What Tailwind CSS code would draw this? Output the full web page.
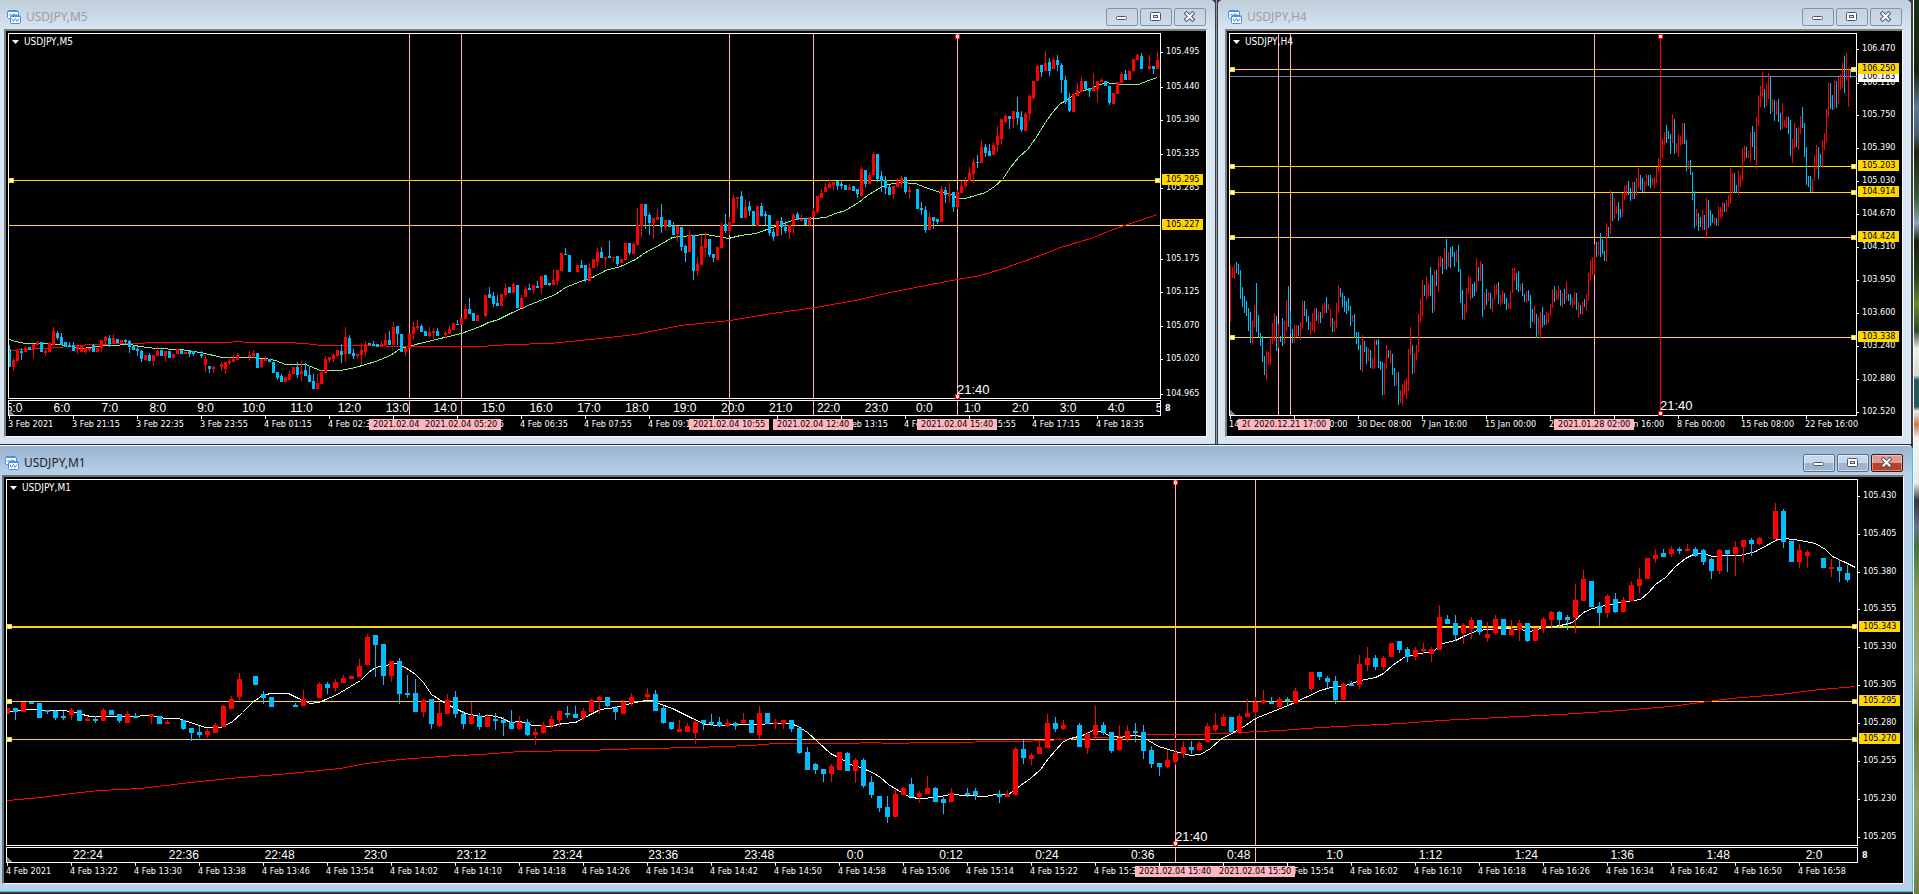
<!DOCTYPE html>
<html lang="en">
<head>
<meta charset="utf-8">
<title>USDJPY charts</title>
<script src="https://cdn.jsdelivr.net/npm/@tailwindcss/browser@4"></script>
</head>
<body class="flex h-screen min-h-[600px] overflow-hidden bg-[#3c3f44] font-['Noto_Sans','Open_Sans',sans-serif]">

<!-- icons shared by the three windows -->
<svg class="hidden" aria-hidden="true">
  <symbol id="chart-icon" viewBox="0 0 14 14">
    <path d="M1.500 .5h9l1 1v7h-10l-1-1v-6z" fill="#fff" stroke="#4a8fe0"/>
    <path d="M1 1.500h10" stroke="#4a8fe0" stroke-width="1"/>
    <path d="M2 5.500l1.500-1.500l1.500 2l1.500-2.500l1.500 1.500h2" fill="none" stroke="#4a8fe0"/>
    <rect x="3.500" y="5.500" width="10" height="8" rx="1" fill="#fff" stroke="#4a8fe0"/>
    <path d="M4 6.500h9" stroke="#4a8fe0"/>
    <path d="M5 8.500l1.500 3l2-3l1.500 3l2-3" fill="none" stroke="#4a8fe0"/>
  </symbol>
  <symbol id="min-icon" viewBox="0 0 32 18"><rect x="10.500" y="8.500" width="10" height="3" rx="1" fill="#fff" stroke="#50566a"/></symbol>
  <symbol id="max-icon" viewBox="0 0 32 18"><rect x="10.500" y="4.500" width="10" height="8" rx="1" fill="#fff" stroke="#50566a"/><rect x="13.500" y="7.500" width="4" height="2" fill="#dfe8f2" stroke="#50566a"/></symbol>
  <symbol id="close-icon" viewBox="0 0 32 18"><path d="M12.500 5.500l6 6M18.500 5.500l-6 6" stroke="#50566a" stroke-width="4" stroke-linecap="square"/><path d="M12.500 5.500l6 6M18.500 5.500l-6 6" stroke="#fff" stroke-width="2" stroke-linecap="square"/></symbol>
</svg>

<main class="grid min-w-0 flex-1 grid-rows-[444fr_450fr]">
  <div class="grid min-h-0 grid-cols-[1215fr_3px_693fr] pr-[2px]">
    <!-- M5 -->
    <section class="flex min-h-0 min-w-0 flex-col rounded-tr-[5px] bg-[#d7e4f2] pr-[8px] pb-[7px] pl-[4px]">
      <header class="-mr-[8px] -ml-[4px] flex h-[29px] shrink-0 items-start gap-[5px] rounded-tr-[5px] bg-linear-to-b from-[#bfcddb] to-[#d7e4f2] pt-[8px] pr-[9px] pl-[7px]">
        <svg class="mt-[2px] size-[14px]"><use href="#chart-icon"/></svg>
        <h2 class="flex-1 text-[12px] leading-[18px] text-[#9b9da0]">USDJPY,M5</h2>
        <div class="flex gap-[2px]">
          <button aria-label="Minimize" class="h-[18px] w-[32px] rounded-[2px] border border-[#8492ad] bg-linear-to-b from-[#c3d1e0] to-[#cddbea]"><svg class="-m-px h-[18px] w-[32px]"><use href="#min-icon"/></svg></button>
          <button aria-label="Maximize" class="h-[18px] w-[32px] rounded-[2px] border border-[#8492ad] bg-linear-to-b from-[#c3d1e0] to-[#cddbea]"><svg class="-m-px h-[18px] w-[32px]"><use href="#max-icon"/></svg></button>
          <button aria-label="Close" class="h-[18px] w-[32px] rounded-[2px] border border-[#8492ad] bg-linear-to-b from-[#c3d1e0] to-[#cddbea]"><svg class="-m-px h-[18px] w-[32px]"><use href="#close-icon"/></svg></button>
        </div>
      </header>
      <div id="m5" class="flex min-h-0 flex-1 border-t-2 border-r border-b border-l-2 border-t-[#808080] border-r-white border-b-white border-l-[#808080] bg-black pt-[2px] pl-[2px]"></div>
    </section>
    <div class="border-x border-[#3b3b40] bg-[#8f979f]"></div>
    <!-- H4 -->
    <section class="flex min-h-0 min-w-0 flex-col rounded-t-[5px] bg-[#d7e4f2] pr-[8px] pb-[7px] pl-[7px]">
      <header class="-mr-[8px] -ml-[7px] flex h-[29px] shrink-0 items-start gap-[5px] rounded-t-[5px] bg-linear-to-b from-[#bfcddb] to-[#d7e4f2] pt-[8px] pr-[9px] pl-[10px]">
        <svg class="mt-[2px] size-[14px]"><use href="#chart-icon"/></svg>
        <h2 class="flex-1 text-[12px] leading-[18px] text-[#9b9da0]">USDJPY,H4</h2>
        <div class="flex gap-[2px]">
          <button aria-label="Minimize" class="h-[18px] w-[32px] rounded-[2px] border border-[#8492ad] bg-linear-to-b from-[#c3d1e0] to-[#cddbea]"><svg class="-m-px h-[18px] w-[32px]"><use href="#min-icon"/></svg></button>
          <button aria-label="Maximize" class="h-[18px] w-[32px] rounded-[2px] border border-[#8492ad] bg-linear-to-b from-[#c3d1e0] to-[#cddbea]"><svg class="-m-px h-[18px] w-[32px]"><use href="#max-icon"/></svg></button>
          <button aria-label="Close" class="h-[18px] w-[32px] rounded-[2px] border border-[#8492ad] bg-linear-to-b from-[#c3d1e0] to-[#cddbea]"><svg class="-m-px h-[18px] w-[32px]"><use href="#close-icon"/></svg></button>
        </div>
      </header>
      <div id="h4" class="flex min-h-0 flex-1 border-t-2 border-r border-b border-l-2 border-t-[#808080] border-r-white border-b-white border-l-[#808080] bg-black pt-[2px] pl-[2px]"></div>
    </section>
  </div>
  <!-- M1, the active window -->
  <section class="flex min-h-0 flex-col border-t border-b border-[#2b2b30] pb-px">
    <div class="flex min-h-0 flex-1 flex-col rounded-tr-[5px] border-t border-r border-b border-t-white border-r-[#35c9e8] border-b-[#35c9e8] bg-[#b9d1ea] pr-[8px] pb-[7px] pl-[2px]">
      <header class="-mr-[8px] -ml-[2px] flex h-[29px] shrink-0 items-start gap-[5px] rounded-tr-[5px] bg-linear-to-b from-[#99b4d1] to-[#b9d1ea] pt-[8px] pr-[9px] pl-[5px]">
        <svg class="mt-[2px] size-[14px]"><use href="#chart-icon"/></svg>
        <h2 class="flex-1 text-[12px] leading-[18px] text-[#1e2329]">USDJPY,M1</h2>
        <div class="flex gap-[2px]">
          <button aria-label="Minimize" class="h-[18px] w-[32px] rounded-[2px] border border-[#5b6b85] bg-linear-to-b from-[#c5d8ec] from-50% to-[#9bb5d2] to-50% shadow-[inset_0_0_0_1px_rgba(255,255,255,0.5)]"><svg class="-m-px h-[18px] w-[32px]"><use href="#min-icon"/></svg></button>
          <button aria-label="Maximize" class="h-[18px] w-[32px] rounded-[2px] border border-[#5b6b85] bg-linear-to-b from-[#c5d8ec] from-50% to-[#9bb5d2] to-50% shadow-[inset_0_0_0_1px_rgba(255,255,255,0.5)]"><svg class="-m-px h-[18px] w-[32px]"><use href="#max-icon"/></svg></button>
          <button aria-label="Close" class="h-[18px] w-[32px] rounded-[2px] border border-[#43141c] bg-linear-to-b from-[#e09a8e] from-50% to-[#bd4026] to-50% shadow-[inset_0_0_0_1px_rgba(255,255,255,0.4)]"><svg class="-m-px h-[18px] w-[32px]"><use href="#close-icon"/></svg></button>
        </div>
      </header>
      <div id="m1" class="flex min-h-0 flex-1 border-t-2 border-r border-b border-l-2 border-t-[#707070] border-r-white border-b-white border-l-[#707070] bg-black pt-[2px] pl-[2px]"></div>
    </div>
  </section>
</main>
<!-- desktop wallpaper showing at the edge -->
<aside class="w-[6px] shrink-0 border-l border-white bg-[linear-gradient(to_bottom,#16301a_0%,#1c2c14_4%,#16240f_8%,#5f7a90_12%,#4a6070_15%,#1c2410_17%,#3d5a35_22%,#8fa5b8_25%,#14200c_27%,#2c441c_31%,#6a8a2a_34%,#2f4a22_37%,#f0f0f0_39%,#d8d8d0_42%,#265a58_42.500%,#265a58_45.500%,#eeeeee_46%,#c87848_47.500%,#f2f2ee_49%,#eceae6_54%,#3a3438_56%,#6c7288_59%,#48723c_61%,#8a9a50_66%,#a3a77a_75%,#6f7f3a_82%,#9aa066_90%,#75803f_100%)]"></aside>

<script>
// Candle tokens: R (rise) or B (fall), then high, body top, body bottom, low. "-" is an empty slot.
const m5Candles = `B345,349,367,367 R358,360,367,371 R350,351,361,361 B348,351,353,360 R346,348,352,352 B347,347,350,350 R344,344,350,358 R341,342,345,345 B342,342,352,352 R348,351,353,356
R342,343,352,352 R327,331,345,345 B331,333,338,340 B333,337,345,345 B342,342,347,347 B342,345,347,347 B342,345,351,351 R346,346,350,354 R346,346,352,352 R348,348,352,354
R348,348,350,352 B344,345,352,352 R348,348,352,352 R340,340,348,352 R336,337,341,345 B335,338,344,347 R334,338,343,343 B339,339,343,343 R340,340,344,344 B339,340,342,345
B340,341,347,353 B346,346,350,350 B346,349,351,356 B350,351,359,362 R355,355,360,360 B353,355,361,361 R355,355,361,366 R346,351,356,356 B350,350,356,356 R351,351,356,362
B351,351,358,358 R354,354,358,358 R349,349,354,354 B350,350,354,354 R352,352,354,354 B351,351,354,357 B351,351,354,356 - B351,354,356,358 R355,359,365,372
B366,366,369,373 R366,367,369,373 - R362,364,367,371 R362,362,369,374 R357,361,363,365 R355,359,362,362 R353,355,360,360 - -
R351,355,357,361 R350,353,356,358 B353,353,368,368 R359,359,367,368 R356,359,361,361 B359,359,362,362 B362,362,373,373 B372,372,378,380 B374,376,382,382 R377,377,382,382
R371,374,380,380 R367,367,374,374 B362,367,375,378 R361,371,374,381 B363,370,376,376 B366,375,382,382 B374,381,389,389 R374,383,389,389 R370,372,384,384 R356,359,373,373
R357,357,360,362 R354,355,359,362 R350,350,356,357 B344,351,355,363 R327,337,354,362 B335,338,354,354 B349,353,356,359 R354,354,356,359 R343,350,355,365 R341,344,352,356
B343,343,345,345 B341,344,346,346 B344,344,347,347 R341,344,347,347 R333,340,345,345 B331,340,345,345 R322,327,345,345 B326,326,334,345 B334,334,352,352 R348,348,352,356
R333,333,349,349 R322,327,334,340 R320,326,328,330 B324,326,332,332 B331,331,336,336 R327,332,336,338 R328,331,333,339 B328,331,336,336 - R331,333,335,338
R326,329,334,334 R323,323,330,330 B320,324,325,325 R318,318,325,325 R304,309,319,319 B298,309,314,314 B313,313,321,321 R315,315,321,321 - R295,295,316,317
B287,294,298,298 B292,296,304,307 B295,303,306,306 R294,294,306,306 R283,288,295,297 B287,287,293,293 R282,284,293,293 B285,285,308,308 R295,298,308,308 R286,289,297,297
B284,288,290,290 R285,285,290,293 B281,286,288,288 R276,276,288,294 B275,275,285,285 B283,283,285,286 R270,280,285,285 R270,270,281,285 R253,253,271,271 B248,254,255,255
B255,255,272,272 - R265,265,272,272 B260,265,268,268 B265,265,280,282 R263,268,281,281 R259,259,268,268 R248,252,262,267 B247,252,258,258 R257,257,259,268
B241,256,258,258 R257,257,258,262 B256,256,264,266 R259,259,263,263 R243,243,260,260 B243,243,253,255 R242,244,254,254 R208,225,245,245 R204,204,226,237 B204,204,216,229
B213,215,223,235 R218,218,223,239 R209,217,220,220 B204,217,227,233 R220,220,227,230 B220,220,227,227 B222,226,235,235 R226,226,234,242 B227,227,247,251 B245,246,253,262
R230,235,252,252 B235,235,271,280 R258,264,271,276 R235,246,265,265 R232,239,248,257 B239,239,255,257 B254,254,258,262 R247,247,260,260 R222,225,248,248 B214,224,231,233
R217,222,231,235 R195,198,223,223 R197,197,199,209 B191,196,218,218 R199,207,218,218 B201,206,211,216 B211,211,225,225 R206,206,226,226 B203,206,216,217 B211,214,216,225
B215,215,233,236 B229,232,237,241 R221,221,236,236 B217,221,227,235 B221,227,231,233 R225,225,232,239 R213,215,225,234 B212,214,220,220 R214,219,221,221 B218,218,225,225
R217,217,225,227 R208,211,217,217 R196,196,212,214 R189,193,198,198 R183,187,192,192 R179,184,188,188 R182,182,185,190 B181,181,186,190 B180,184,186,189 B185,185,190,190
R184,187,190,190 B186,186,191,191 B189,189,194,198 R167,169,196,196 B170,170,184,187 R172,175,184,184 R152,154,175,177 B154,154,179,182 B171,176,181,192 B176,180,188,194
B185,187,195,195 R186,186,194,199 R178,182,187,187 R176,178,183,188 B177,177,192,194 R186,190,192,199 - B189,189,209,209 B202,208,210,215 B206,210,230,233
R212,217,230,230 B217,217,221,229 B219,219,222,224 R186,189,222,222 B187,190,195,203 R183,193,196,203 B192,192,207,212 R190,192,207,209 R181,186,193,193 R177,181,186,188
R167,173,181,181 R158,162,174,183 B155,162,163,168 R140,147,163,163 B144,147,153,157 B144,151,156,156 R142,145,155,155 R126,136,145,152 R119,119,139,145 R114,116,122,123
B116,116,119,129 R111,111,119,128 B97,112,118,125 B111,117,130,132 R112,114,131,131 R94,96,114,121 R81,81,98,100 R65,66,81,81 B65,65,72,77 R51,63,71,71
B58,62,71,76 R57,60,69,69 B55,60,65,71 B63,65,80,93 B76,80,102,104 B93,99,111,112 R94,94,112,112 R83,90,96,96 R77,81,92,92 B81,81,89,90
B88,88,91,97 R73,87,91,91 R81,81,89,102 R78,80,82,82 B81,81,86,86 B86,86,103,105 R93,93,104,104 R82,82,94,94 R72,74,83,83 B70,74,80,80
R71,71,80,80 R59,59,71,72 R54,55,60,60 B53,56,69,69 - R55,66,69,70 B66,66,69,74 R52,60,69,69`;

const m1Candles = `R708,708,714,714 B708,708,712,720 R702,702,712,712 B702,702,704,704 B703,703,718,718 B710,710,712,714 B710,711,718,720 B711,716,718,720 R708,710,715,720 B710,710,721,721
R717,719,721,721 B716,719,721,723 R708,710,721,721 B710,710,715,715 B714,714,721,723 R711,714,723,723 B713,716,718,718 - R714,714,717,724 B716,716,724,724
R720,722,724,724 - B720,720,729,730 B728,728,733,741 B726,732,735,738 R729,731,735,738 R723,725,733,733 R705,706,727,727 R696,699,709,709 R673,679,697,700
- B676,676,685,685 B691,694,698,704 B697,697,707,707 - - B703,705,707,707 R690,699,706,706 - R682,684,698,698
B682,684,688,694 R679,682,688,692 R675,678,683,683 R676,676,679,679 R659,666,677,677 R634,637,665,665 B635,635,645,677 B644,644,676,685 R661,661,676,682 B658,661,694,704
B675,693,695,698 B679,693,712,712 R699,700,712,717 B699,699,724,729 R702,713,726,727 R694,700,714,714 B691,697,714,718 B711,714,724,729 R702,716,724,724 B713,716,727,730
R714,717,727,727 B713,719,721,730 B717,720,723,736 B710,722,729,729 R716,722,729,730 B719,722,735,736 R728,732,735,745 R722,725,733,734 R716,719,726,729 R711,711,720,727
B706,713,715,718 B706,714,718,718 R708,711,718,720 R699,700,712,712 R696,697,700,714 B697,697,706,707 B706,708,712,720 R700,702,714,714 R693,697,703,706 -
R688,694,697,700 B690,694,711,711 B706,708,723,724 B722,722,729,730 R720,729,732,732 R723,726,732,732 R720,722,733,744 B720,720,723,730 B714,722,724,726 B717,722,726,727
R719,723,726,727 B722,723,726,730 R713,720,723,723 B720,720,733,733 R706,713,735,739 B713,713,724,724 R719,722,724,729 R720,720,724,729 B720,720,729,732 B728,728,753,754
B747,752,770,770 B763,764,770,774 B769,769,774,782 R764,766,774,782 R752,752,770,770 B752,753,771,771 R758,760,771,783 B758,760,786,788 B776,782,795,798 B796,796,808,812
B796,807,817,823 R789,794,817,817 R787,788,795,795 B778,784,797,797 R791,793,797,803 R776,788,794,794 B787,788,802,802 B797,799,803,814 R788,793,802,802 -
B788,793,795,797 B788,791,795,800 - - B790,794,797,803 R790,794,797,797 R747,749,795,795 B740,749,758,764 R753,755,759,765 R741,747,754,754
R714,723,748,748 B717,723,729,732 R720,725,729,730 - B723,725,747,747 R732,734,748,754 R706,725,735,741 B722,725,733,735 B732,732,751,753 R725,738,750,751
R725,731,739,742 B723,731,733,742 B725,732,751,759 B746,750,764,768 B763,763,767,776 R750,760,767,768 R738,753,762,765 R741,747,754,758 B741,747,750,754 R741,743,750,751
R723,726,742,742 R713,725,730,732 R714,717,726,726 B717,717,732,732 R714,716,733,733 R699,713,717,717 R697,702,712,718 R690,700,703,704 B697,702,704,704 R697,699,707,707
B697,699,701,705 R688,691,703,703 - R672,672,689,691 B672,672,677,680 B676,678,682,688 B676,681,700,704 R682,684,700,700 B681,684,686,686 R655,664,685,689
R647,658,665,671 B655,658,667,670 R656,658,667,670 R643,643,657,657 B641,641,650,653 B647,649,657,662 R647,650,657,660 R643,649,651,653 R647,649,654,662 R605,617,650,650
B615,619,624,624 B615,623,635,641 R623,625,633,644 R617,620,629,639 B620,620,632,635 R622,634,638,642 R615,619,633,635 B619,619,635,635 R620,629,635,635 R620,623,630,641
B623,623,641,642 R628,628,641,641 R617,619,629,633 R611,612,620,627 B611,612,620,627 B615,617,620,630 R584,600,618,633 R570,579,601,601 B581,581,607,607 B602,606,613,626
R594,596,613,618 B593,599,612,613 R597,600,612,612 R581,585,601,601 R568,579,586,594 R558,558,579,579 R549,555,559,563 B549,553,557,557 R546,549,554,557 B547,549,551,554
R544,549,551,551 B547,549,556,557 B549,550,562,565 B558,559,571,579 R549,550,571,574 B550,550,554,572 R541,547,554,576 R540,540,547,563 B538,540,544,556 R537,538,544,545
- R503,511,539,539 B509,511,542,548 B541,541,562,562 R544,550,562,568 R550,552,556,568 - B558,558,568,568 R559,567,569,577 B559,567,571,582 B565,573,580,582`;

// Bars without bodies: direction, high, low.
const h4Bars = `R266,322 R267,278 R265,279 B262,273 B264,275 B270,299 B287,307 B296,313 B301,316 B308,331 B312,343 R321,345 R305,327 B283,332 B315,337 B333,346 B336,362 B356,375 R351,380 R352,365
R337,365 R323,344 R313,341 B316,351 R324,348 B336,342 B318,346 R321,344 R300,331 B286,327 B311,334 B329,343 R325,343 R325,337 B325,336 R322,340 R300,329 B301,316 B309,322 B316,330
R322,335 R313,331 R308,333 B308,321 R311,324 B312,323 R305,318 R303,313 B297,313 R304,310 R309,327 B318,332 R321,332 R303,328 R285,313 B288,297 B293,307 B296,312 B301,314 B298,311
B306,326 R315,322 B314,338 B332,344 B332,350 B345,370 R335,372 B341,352 B347,364 R348,361 B350,368 R358,369 R339,369 B340,345 B339,368 B361,370 B362,395 R363,395 R345,369 B350,358
R350,363 B354,375 B368,386 R373,386 B372,405 R390,403 R384,406 R380,395 R378,399 R349,391 R327,355 B345,374 R353,373 R345,360 R314,352 R299,322 R280,317 B285,296 R276,299 R284,297
B267,296 B275,313 R270,311 B270,286 R258,292 R256,267 B258,274 R248,269 B239,270 R252,267 B247,268 B246,257 B252,267 R250,262 B245,272 B269,303 B290,319 R304,320 R288,313 R276,294
R278,300 B284,298 B282,296 R258,292 B267,281 R261,281 B264,317 R292,310 B289,305 R292,301 B293,309 R298,312 R285,300 R284,295 B282,304 R295,306 R290,303 B293,304 B298,310 R303,309
R291,309 R268,293 R268,281 B273,290 B271,292 R284,291 B283,296 B294,302 R291,303 B290,301 B295,328 B309,322 R306,324 B314,338 R317,335 R312,339 B307,327 B315,325 R312,325 R313,323
R304,316 R289,308 B286,302 R290,300 R286,300 B290,306 R293,307 B289,304 R282,301 B294,301 B294,305 R298,308 R292,305 B293,310 R302,318 B305,314 R302,315 B299,307 R294,311 R273,301
R260,281 R257,275 R244,275 B242,257 R241,255 B233,257 B239,254 B251,261 R223,262 B227,238 R190,234 B193,221 R198,219 R206,214 B202,221 B209,218 R193,217 R186,200 R185,196 B181,195
B188,201 R182,199 B182,199 R178,195 R168,188 B175,190 B178,192 R181,192 R174,186 B175,186 B175,188 R178,185 R177,188 R167,183 R158,172 R158,170 R139,158 R132,145 B125,143 B131,139
B134,154 R114,143 B119,154 R143,153 R134,157 R136,146 R123,144 B123,144 B140,171 R161,169 B160,175 B172,200 B191,228 R209,226 B213,231 B217,227 R210,230 B215,230 R198,239 B200,228
B210,226 B214,223 R217,225 B218,226 R206,226 R207,218 R202,217 B203,212 R200,212 R195,207 R168,204 R173,193 B173,193 B185,193 R171,195 R175,187 R148,181 R146,161 B147,158 R151,158
R132,162 B126,147 B132,160 R117,169 R95,126 R86,107 R72,98 B89,108 R84,106 R73,99 B77,114 R99,112 B100,121 R101,115 B99,122 B113,130 R103,129 R120,127 R116,128 B117,134
B120,156 R139,163 R123,148 B128,147 R127,150 R116,134 B107,128 B123,157 B147,185 B176,187 B176,192 R179,192 R155,181 R145,169 B147,179 B154,167 R140,168 R133,150 R109,142 R83,117
B83,109 B95,110 R80,109 B81,108 R77,104 R74,90 R62,88 B56,93 R53,81 R68,107 B70,78`;

const stepLabels = (n, x, step, fn) => Array.from({ length: n }, (_, k) => [x + step * k, fn(k)]);
const two = n => String(n).padStart(2, '0');

const charts = [
  {
    id: 'm5', title: 'USDJPY,M5', x: 8, y: 33, w: 1153, plotH: 366, strip: true,
    first: 9, step: 4, half: 1, candles: m5Candles,
    hlines: [[180, 1, true], [225, 1, false]],
    vlines: [[409], [461], [729], [813], [957, '#ffb6c1', true]],
    note: [957, 390],
    averages: [
      ['#90ee90', '9,339 15,341 25,343 40,343 60,344 68,346 82,348 95,346 110,345 130,344 140,346 155,348 180,349 200,352 222,357 250,357 265,358 275,360 285,364 305,364 320,370 340,370 355,367 375,361 390,355 400,348 415,344 440,338 461,333 480,326 488,322 498,319 512,312 530,304 545,298 555,294 565,287 580,281 592,277 605,270 620,266 635,259 645,252 660,244 672,237 680,236 705,234 718,236 728,238 740,235 755,233 775,226 792,220 798,218 815,218 825,217 835,213 845,210 858,202 867,195 880,187 888,184 900,182 915,183 925,187 940,192 950,193 957,198 965,198 975,195 985,192 994,186 1002,179 1010,167 1018,157 1027,149 1035,138 1045,122 1052,112 1060,103 1066,100 1075,93 1090,88 1105,82 1112,83 1120,84 1138,84 1148,80 1157,77'],
      ['#ff0000', '9,350 25,349 45,348 70,346 90,344 130,343 160,342 225,342 240,341 245,342 285,342 305,343 320,345 380,345 390,346 480,346 510,344 550,343 590,339 635,334 655,330 680,325 730,320 765,314 815,307 855,300 885,293 905,289 925,285 957,279 980,275 1000,269 1020,262 1045,253 1060,247 1090,238 1110,230 1130,223 1157,214']
    ],
    prices: [[52, '105.495'], [87, '105.440'], [120, '105.390'], [154, '105.335'], [188, '105.285'], [259, '105.175'], [292, '105.125'], [326, '105.070'], [359, '105.020'], [394, '104.965']],
    priceTags: [[180, '105.295'], [225, '105.227']],
    hours: stepLabels(25, 13, 48, k => ((k + 5) % 24) + ':0'),
    dates: [[8, '3 Feb 2021'], [72, '3 Feb 21:15'], [136, '3 Feb 22:35'], [200, '3 Feb 23:55'], ...stepLabels(14, 264, 64, k => '4 Feb ' + two(Math.floor((75 + 80 * k) / 60)) + ':' + two((75 + 80 * k) % 60))],
    dateTags: [[369, '2021.02.04 04:15'], [421, '2021.02.04 05:20'], [689, '2021.02.04 10:55'], [773, '2021.02.04 12:40'], [917, '2021.02.04 15:40']]
  },
  {
    id: 'h4', title: 'USDJPY,H4', x: 1229, y: 33, w: 628, plotH: 383, strip: false,
    first: 1230, step: 2, half: 0, candles: h4Bars,
    bid: 76,
    hlines: [[69, 1, true], [166, 1, true], [192, 1, true], [237, 1, true], [337, 1, true]],
    vlines: [[1278], [1290], [1594], [1660, '#ff0000', true]],
    note: [1660, 406],
    averages: [],
    prices: [[49, '106.470'], [83, '106.110'], [115, '105.750'], [148, '105.390'], [181, '105.030'], [214, '104.670'], [247, '104.310'], [280, '103.950'], [313, '103.600'], [346, '103.240'], [379, '102.880'], [412, '102.520']],
    bidTag: [77, '106.183'],
    priceTags: [[69, '106.250'], [166, '105.203'], [192, '104.914'], [237, '104.424'], [337, '103.338']],
    hours: [],
    dates: [[1229, '14 Dec 2020'], [1293, '22 Dec 00:00'], [1357, '30 Dec 08:00'], [1421, '7 Jan 16:00'], [1485, '15 Jan 00:00'], [1549, '22 Jan 08:00'], [1613, '29 Jan 16:00'], [1677, '8 Feb 00:00'], [1741, '15 Feb 08:00'], [1805, '22 Feb 16:00']],
    dateTags: [[1238, '2020.12.18 17:00'], [1250, '2020.12.21 17:00'], [1554, '2021.01.28 02:00']]
  },
  {
    id: 'm1', title: 'USDJPY,M1', x: 6, y: 479, w: 1852, plotH: 367, strip: true,
    first: 7, step: 8, half: 2, candles: m1Candles,
    hlines: [[626, 2, true], [701, 1, true], [739, 1, true]],
    vlines: [[1175, '#ffb6c1', true], [1255]],
    note: [1175, 837],
    averages: [
      ['#ff0000', '7,800 40,797 80,792 100,790 140,788 190,782 240,777 290,773 340,768 365,763 400,759 440,756 480,754 520,751 585,750 645,748 695,747 750,745 775,743 850,743 870,742 890,743 930,742 1020,741 1045,740 1080,738 1125,736 1150,734 1200,734 1240,732 1280,730 1320,727 1360,725 1400,723 1440,720 1500,717 1560,714 1620,710 1670,706 1700,702 1730,698 1780,694 1810,690 1855,686'],
      ['#ffffff', '7,712 15,710 30,709 45,710 60,710 72,711 82,714 90,716 130,716 150,715 165,718 178,718 190,722 205,727 220,727 231,722 242,712 252,702 262,695 270,693 288,693 298,698 310,703 318,702 335,695 350,686 360,680 368,672 375,667 385,665 395,663 405,667 415,674 423,682 431,694 445,703 455,708 465,713 480,716 490,715 500,717 510,722 520,721 532,725 550,726 562,723 575,722 590,714 600,709 615,707 630,703 645,700 652,700 658,703 672,708 690,717 705,724 720,725 740,724 790,723 798,726 807,732 818,742 830,753 840,758 850,764 860,767 872,772 880,777 888,784 896,789 910,797 920,798 935,797 950,794 985,796 995,794 1008,794 1020,785 1030,778 1040,769 1048,758 1055,750 1063,741 1070,738 1082,735 1093,730 1102,731 1108,735 1120,737 1132,735 1142,736 1148,740 1158,746 1175,751 1190,755 1200,754 1210,748 1220,739 1235,731 1245,725 1255,718 1275,710 1290,704 1305,697 1320,690 1330,687 1345,685 1360,680 1375,677 1383,673 1392,665 1405,656 1420,653 1432,651 1438,647 1442,643 1455,640 1465,635 1477,630 1500,628 1520,629 1530,631 1540,628 1560,625 1572,622 1583,612 1592,608 1605,605 1620,602 1640,599 1648,592 1655,584 1665,577 1675,566 1685,558 1695,553 1703,553 1712,556 1725,555 1740,555 1755,551 1768,544 1777,539 1785,538 1800,540 1815,543 1825,549 1832,556 1845,562 1855,567']
    ],
    prices: [[496, '105.430'], [534, '105.405'], [572, '105.380'], [609, '105.355'], [647, '105.330'], [685, '105.305'], [723, '105.280'], [761, '105.255'], [799, '105.230'], [837, '105.205']],
    priceTags: [[627, '105.343'], [701, '105.295'], [739, '105.270']],
    hours: stepLabels(19, 87, 96, k => { const m = 22 * 60 + 24 + 12 * k; return (Math.floor(m / 60) % 24) + ':' + (m % 60); }),
    dates: [[6, '4 Feb 2021'], ...stepLabels(28, 70, 64, k => '4 Feb ' + Math.floor((802 + 8 * k) / 60) + ':' + two((802 + 8 * k) % 60))],
    dateTags: [[1135, '2021.02.04 15:40'], [1215, '2021.02.04 15:50']]
  }
];

const rect = (x, y, w, h, fill) => `<rect x="${x}" y="${y}" width="${w}" height="${h}" fill="${fill}"/>`;
const handle = (x, y, fill) => rect(x - 2, y - 2, 5, 5, fill) + rect(x - 1, y - 1, 3, 3, '#fff');

function draw(c) {
  const right = c.x + c.w - 1, plotEnd = c.y + c.plotH, areaH = c.strip ? c.plotH + 17 : c.plotH;
  const gold = '#ffd700', pink = '#ffb6c1';
  let s = '';
  if (c.bid) s += rect(c.x + 1, c.bid, c.w - 1, 1, '#778899');
  for (const [y, t] of c.hlines) s += rect(c.x + 1, y, c.w - 2, t, gold);
  for (const [x, color] of c.vlines) {
    s += rect(x, c.y + 1, 1, c.plotH - 1, color || pink);
    if (c.strip) s += rect(x, plotEnd + 2, 1, 14, color || pink);
  }
  for (const [color, pts] of c.averages) {
    const p = pts.split(' ').map(q => q.split(',').map(v => +v + 0.5).join(',')).join(' ');
    s += `<polyline points="${p}" fill="none" stroke="${color}"/>`;
  }
  c.candles.split(/\s+/).forEach((tok, i) => {
    if (tok === '-') return;
    const fill = tok[0] === 'R' ? '#ff0000' : '#00bfff';
    const v = tok.slice(1).split(',').map(Number), x = c.first + c.step * i;
    s += rect(x, v[0], 1, v[v.length - 1] - v[0], fill);
    if (v.length === 4) {
      const left = Math.max(x - c.half, c.x + 1);
      s += rect(left, v[1], x + c.half + 1 - left, Math.max(v[2] - v[1], 1), fill);
    }
  });
  for (const [y, t, grips] of c.hlines) if (grips) s += handle(c.x + 3, y, gold) + handle(right - 3, y, gold);
  for (const [x, color, grips] of c.vlines) if (grips) s += handle(x, c.y + 3, '#ff0000') + handle(x, plotEnd - 3, '#ff0000') + (color === pink ? rect(x, c.y + 1, 1, 5, pink) + rect(x, plotEnd - 5, 1, 5, pink) : '');
  const b = c.y + areaH - 1;
  s += `<path d="M${c.x + 1} ${b - 5}l5 5h-5z" fill="#778899"/>`;

  const px = x => ((x - c.x) / c.w * 100) + '%';
  const py = y => ((y - c.y) / areaH * 100) + '%';
  const frame = c.strip
    ? '<div class="min-h-0 flex-1 border border-white"></div><div class="mt-px h-[16px] shrink-0 border border-white"></div>'
    : '<div class="min-h-0 flex-1 border border-white"></div>';
  const hours = c.strip
    ? `<div class="absolute inset-x-px bottom-0 h-[16px] overflow-hidden font-['Liberation_Sans',sans-serif] text-[12px] leading-[16px]">` +
      c.hours.map(([x, t]) => `<span class="absolute -translate-x-1/2" style="left:${px(x)}">${t}</span>`).join('') + '</div>'
    : '';
  document.getElementById(c.id).innerHTML = `
    <div class="flex min-w-0 flex-1 flex-col font-['DejaVu_Sans_Condensed','Noto_Sans',sans-serif] text-white">
      <div class="relative flex min-h-0 flex-1 flex-col">
        ${frame}
        ${hours}
        <svg class="absolute inset-0 h-full w-full" viewBox="${c.x} ${c.y} ${c.w} ${areaH}" preserveAspectRatio="none" shape-rendering="crispEdges">${s}</svg>
        <div class="absolute top-[2px] left-[4px] flex items-center gap-[5px] text-[10px] leading-[14px]"><svg class="h-[4px] w-[7px]" viewBox="0 0 7 4"><path d="M0 0h7L3.500 4z" fill="#fff"/></svg>${c.title}</div>
        <span class="absolute -mt-[8px] font-['Liberation_Sans',sans-serif] text-[13px] leading-[16px]" style="left:${px(c.note[0])};top:${py(c.note[1])}">21:40</span>
      </div>
      <div class="relative h-[20px] shrink-0 text-[9px] leading-[11px] whitespace-nowrap">
        ${c.dates.map(([x, t]) => `<i class="absolute top-0 ml-px h-[3px] w-px bg-white" style="left:${px(x)}"></i><span class="absolute top-[3px]" style="left:${px(x)}">${t}</span>`).join('')}
        ${c.dateTags.map(([x, t]) => `<span class="absolute top-[3px] h-[11px] w-[80px] bg-[#ffb6c1] pl-[4px] text-black" style="left:${px(x)}">${t}</span>`).join('')}
      </div>
    </div>
    <div class="mb-[20px] w-[45px] shrink-0 font-['DejaVu_Sans_Condensed','Noto_Sans',sans-serif] text-[9px] leading-[11px] text-white">
      <div class="relative h-full">
        ${c.prices.map(([y, t]) => `<i class="absolute left-0 h-px w-[2px] bg-white" style="top:${py(y)}"></i><span class="absolute left-[5px] -mt-[6px]" style="top:${py(y)}">${t}</span>`).join('')}
        ${c.bidTag ? `<span class="absolute left-px -mt-[6px] h-[11px] w-[41px] bg-white pl-[4px] text-black" style="top:${py(c.bidTag[0])}">${c.bidTag[1]}</span>` : ''}
        ${c.priceTags.map(([y, t]) => `<span class="absolute left-px -mt-[6px] h-[11px] w-[41px] bg-[#ffd700] pl-[4px] text-black" style="top:${py(y)}">${t}</span>`).join('')}
        ${c.strip ? '<span class="absolute bottom-[2px] left-[4px] font-bold">8</span>' : ''}
      </div>
    </div>`;
}
charts.forEach(draw);
</script>
</body>
</html>
